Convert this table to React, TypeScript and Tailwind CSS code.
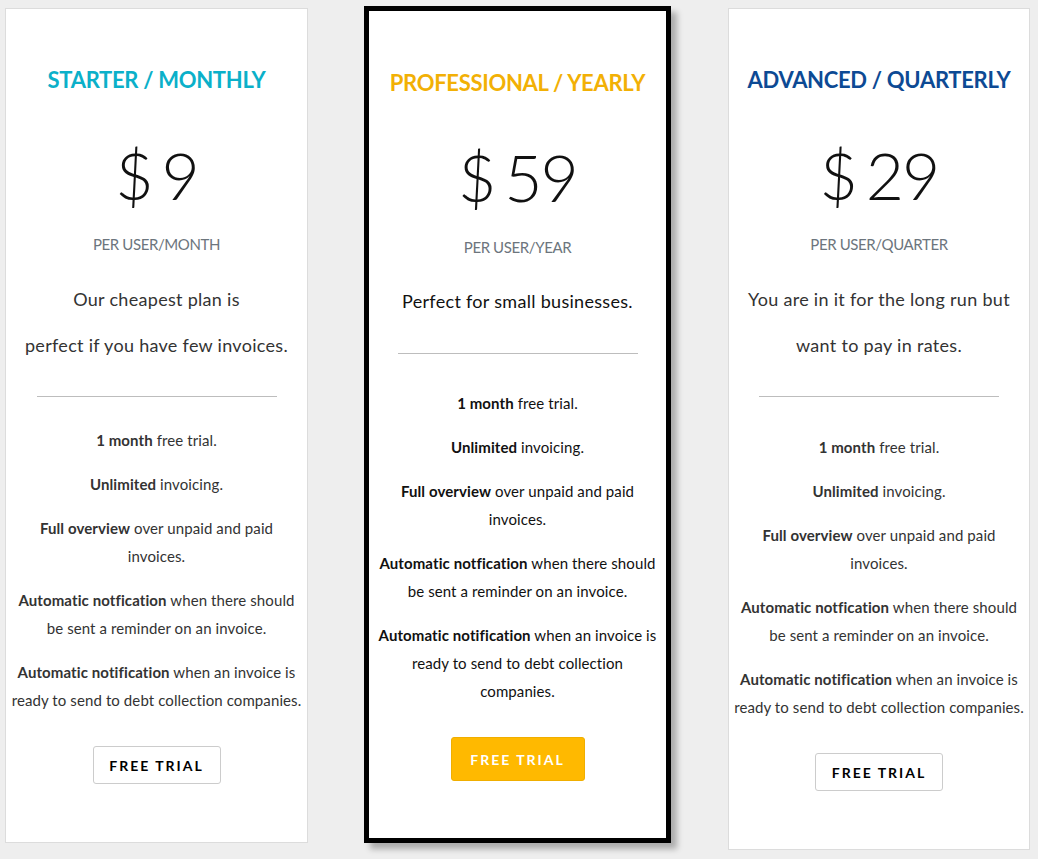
import React from "react";

const font = { fontFamily: "Lato, 'Noto Sans', sans-serif" };

function F({ children, last }: { children: React.ReactNode; last?: boolean }) {
  return (
    <p className={`whitespace-nowrap text-[15px] leading-[28px] tracking-[0.1px] ${last ? "" : "mb-[16px]"}`}>{children}</p>
  );
}

export default function App() {
  return (
    <div className="min-h-[859px] w-[1038px] bg-[#eeeeee] text-center" style={font}>
      <div className="flex items-start pl-[5px]">
        {/* Starter */}
        <div className="mt-[8px] w-[303px] border border-[#dcdcdc] bg-white pb-[58px] pt-[56px] text-[#333]">
          <h2 className="text-[22px] font-bold uppercase leading-[30px] tracking-[-0.3px] text-[#0bb0c9]">Starter / Monthly</h2>
          <div className="mt-[40px] text-[66px] font-light leading-[80px] tracking-[-2px] text-[#111] [word-spacing:-6px]">$ 9</div>
          <div className="mt-[17px] text-[15px] uppercase leading-[24px] tracking-[-0.4px] text-[#6c757d]">Per user/month</div>
          <p className="mt-[20px] whitespace-nowrap text-[18px] leading-[46px] tracking-[0.3px]">
            Our cheapest plan is
            <br />
            perfect if you have few invoices.
          </p>
          <div className="mx-auto mt-[28px] h-px w-[240px] bg-[#bdbdbd]" />
          <div className="mt-[29px]">
            <F><b>1 month</b> free trial.</F>
            <F><b>Unlimited</b> invoicing.</F>
            <F><b>Full overview</b> over unpaid and paid<br />invoices.</F>
            <F><b>Automatic notfication</b> when there should<br />be sent a reminder on an invoice.</F>
            <F last><b>Automatic notification</b> when an invoice is<br />ready to send to debt collection companies.</F>
          </div>
          <button className="mt-[32px] h-[38px] w-[128px] rounded-[3px] border border-[#cccccc] bg-white text-[14px] font-bold tracking-[2px] text-black">
            FREE TRIAL
          </button>
        </div>

        {/* Professional */}
        <div className="ml-[56px] mt-[6px] w-[307px] border-[5px] border-black bg-white pb-[57px] pt-[57px] text-[#111] shadow-[6px_6px_6px_rgba(0,0,0,0.28)]">
          <h2 className="text-[22px] font-bold uppercase leading-[30px] tracking-[-0.3px] text-[#f2b005]">Professional / Yearly</h2>
          <div className="mt-[39px] text-[66px] font-light leading-[80px] tracking-[-2px] text-[#111] [word-spacing:-6px]">$ 59</div>
          <div className="mt-[18px] text-[15px] uppercase leading-[24px] tracking-[-0.4px] text-[#6c757d]">Per user/year</div>
          <p className="mt-[19px] whitespace-nowrap text-[18px] leading-[46px] tracking-[0.3px]">Perfect for small businesses.</p>
          <div className="mx-auto mt-[29px] h-px w-[240px] bg-[#bdbdbd]" />
          <div className="mt-[35px]">
            <F><b>1 month</b> free trial.</F>
            <F><b>Unlimited</b> invoicing.</F>
            <F><b>Full overview</b> over unpaid and paid<br />invoices.</F>
            <F><b>Automatic notfication</b> when there should<br />be sent a reminder on an invoice.</F>
            <F last><b>Automatic notification</b> when an invoice is<br />ready to send to debt collection<br />companies.</F>
          </div>
          <button className="mt-[32px] h-[44px] w-[134px] rounded-[3px] border border-[#f0ae00] bg-[#ffb900] text-[14px] font-bold tracking-[2px] text-white">
            FREE TRIAL
          </button>
        </div>

        {/* Advanced */}
        <div className="ml-[57px] mt-[8px] w-[302px] border border-[#dcdcdc] bg-white pb-[58px] pt-[56px] text-[#333]">
          <h2 className="text-[22px] font-bold uppercase leading-[30px] tracking-[-0.3px] text-[#0d4a94]">Advanced / Quarterly</h2>
          <div className="mt-[40px] text-[66px] font-light leading-[80px] tracking-[-2px] text-[#111] [word-spacing:-6px]">$ 29</div>
          <div className="mt-[17px] text-[15px] uppercase leading-[24px] tracking-[-0.4px] text-[#6c757d]">Per user/quarter</div>
          <p className="mt-[20px] whitespace-nowrap text-[18px] leading-[46px] tracking-[0.3px]">
            You are in it for the long run but
            <br />
            want to pay in rates.
          </p>
          <div className="mx-auto mt-[28px] h-px w-[240px] bg-[#bdbdbd]" />
          <div className="mt-[36px]">
            <F><b>1 month</b> free trial.</F>
            <F><b>Unlimited</b> invoicing.</F>
            <F><b>Full overview</b> over unpaid and paid<br />invoices.</F>
            <F><b>Automatic notfication</b> when there should<br />be sent a reminder on an invoice.</F>
            <F last><b>Automatic notification</b> when an invoice is<br />ready to send to debt collection companies.</F>
          </div>
          <button className="mt-[32px] h-[38px] w-[128px] rounded-[3px] border border-[#cccccc] bg-white text-[14px] font-bold tracking-[2px] text-black">
            FREE TRIAL
          </button>
        </div>
      </div>
    </div>
  );
}
